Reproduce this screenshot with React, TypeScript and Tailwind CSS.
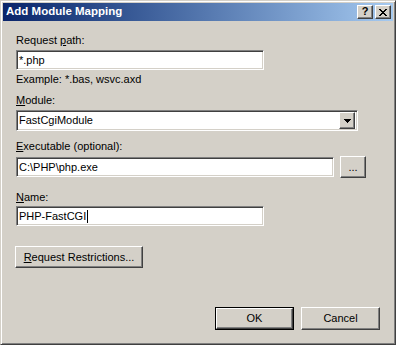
import type React from 'react';

// classic 3D edges
const raised =
  'bg-[#d4d0c8] border border-t-white border-l-white border-r-[#404040] border-b-[#404040] shadow-[inset_-1px_-1px_0_#808080]';
const sunken =
  'bg-white border border-t-[#808080] border-l-[#808080] border-r-white border-b-white shadow-[inset_1px_1px_0_#404040,inset_-1px_-1px_0_#d4d0c8]';

function Label({ pre = '', k, rest, className = '' }: { pre?: string; k: string; rest: string; className?: string }) {
  return (
    <div className={`leading-[13px] text-black ${className}`}>
      {pre}
      <span className="underline underline-offset-[1px]">{k}</span>
      {rest}
    </div>
  );
}

function Field({ value, className = '', caret = false }: { value: string; className?: string; caret?: boolean }) {
  return (
    <div className={`${sunken} h-[20px] flex items-center pl-[2px] ${className}`}>
      <span className="leading-[13px]">{value}</span>
      {caret && <span className="w-px h-[13px] bg-black ml-px" />}
    </div>
  );
}

function Btn({ children, className = '' }: { children: React.ReactNode; className?: string }) {
  return <div className={`${raised} flex items-center justify-center ${className}`}>{children}</div>;
}

export default function App() {
  return (
    <div
      className="w-[396px] h-[345px] bg-[#d4d0c8] border border-t-[#d4d0c8] border-l-[#d4d0c8] border-r-[#404040] border-b-[#404040] shadow-[inset_1px_1px_0_#fff,inset_-1px_-1px_0_#808080] p-[2px] flex flex-col text-[11px] text-black"
      style={{ fontFamily: '"Liberation Sans", Arial, sans-serif' }}
    >
      {/* title bar */}
      <div className="h-[18px] flex items-center bg-gradient-to-r from-[#0a246a] to-[#a6caf0] pl-[3px] pr-[2px]">
        <span className="flex-1 text-white font-bold text-[11.5px] leading-none">Add Module Mapping</span>
        <div className="flex gap-[2px]">
          <Btn className="w-[16px] h-[14px]">
            <span className="font-bold text-[11px] leading-none -mt-px">?</span>
          </Btn>
          <Btn className="w-[16px] h-[14px]">
            <svg width="8" height="7" viewBox="0 0 8 7" shapeRendering="crispEdges">
              <path d="M0 0h2v1h-2zM6 0h2v1h-2zM1 1h2v1h-2zM5 1h2v1h-2zM2 2h4v1h-4zM3 3h2v1h-2zM2 4h4v1h-4zM1 5h2v1h-2zM5 5h2v1h-2zM0 6h2v1h-2zM6 6h2v1h-2z" fill="#000" />
            </svg>
          </Btn>
        </div>
      </div>

      {/* body */}
      <div className="flex-1 flex flex-col pl-[13px] pr-[13px]">
        <Label pre="Request " k="p" rest="ath:" className="mt-[13px]" />
        <Field value="*.php" className="mt-[3px] w-[248px]" />
        <div className="leading-[13px] mt-[3px]">Example: *.bas, wsvc.axd</div>

        <Label k="M" rest="odule:" className="mt-[8px]" />
        <div className={`${sunken} mt-[3px] h-[21px] w-[342px] flex items-center pl-[2px] pr-[2px]`}>
          <span className="flex-1 leading-[13px]">FastCgiModule</span>
          <Btn className="w-[16px] h-[17px]">
            <svg width="7" height="4" viewBox="0 0 7 4" shapeRendering="crispEdges">
              <path d="M0 0h7v1h-7zM1 1h5v1h-5zM2 2h3v1h-3zM3 3h1v1h-1z" fill="#000" />
            </svg>
          </Btn>
        </div>

        <Label k="E" rest="xecutable (optional):" className="mt-[9px]" />
        <div className="mt-[3px] flex items-center gap-[6px]">
          <Field value="C:\PHP\php.exe" className="w-[318px]" />
          <Btn className="w-[26px] h-[22px]">
            <span className="leading-none mt-[1px]">...</span>
          </Btn>
        </div>

        <Label k="N" rest="ame:" className="mt-[13px]" />
        <Field value="PHP-FastCGI" caret className="mt-[2px] w-[248px]" />

        <Btn className="mt-[20px] -ml-px w-[128px] h-[22px]">
          <span>
            <span className="underline underline-offset-[1px]">R</span>equest Restrictions...
          </span>
        </Btn>

        <div className="mt-auto mb-[12px] flex justify-end gap-[7px]">
          <div className="border border-black w-[79px] h-[23px] flex">
            <Btn className="flex-1">OK</Btn>
          </div>
          <Btn className="w-[79px] h-[23px]">Cancel</Btn>
        </div>
      </div>
    </div>
  );
}
